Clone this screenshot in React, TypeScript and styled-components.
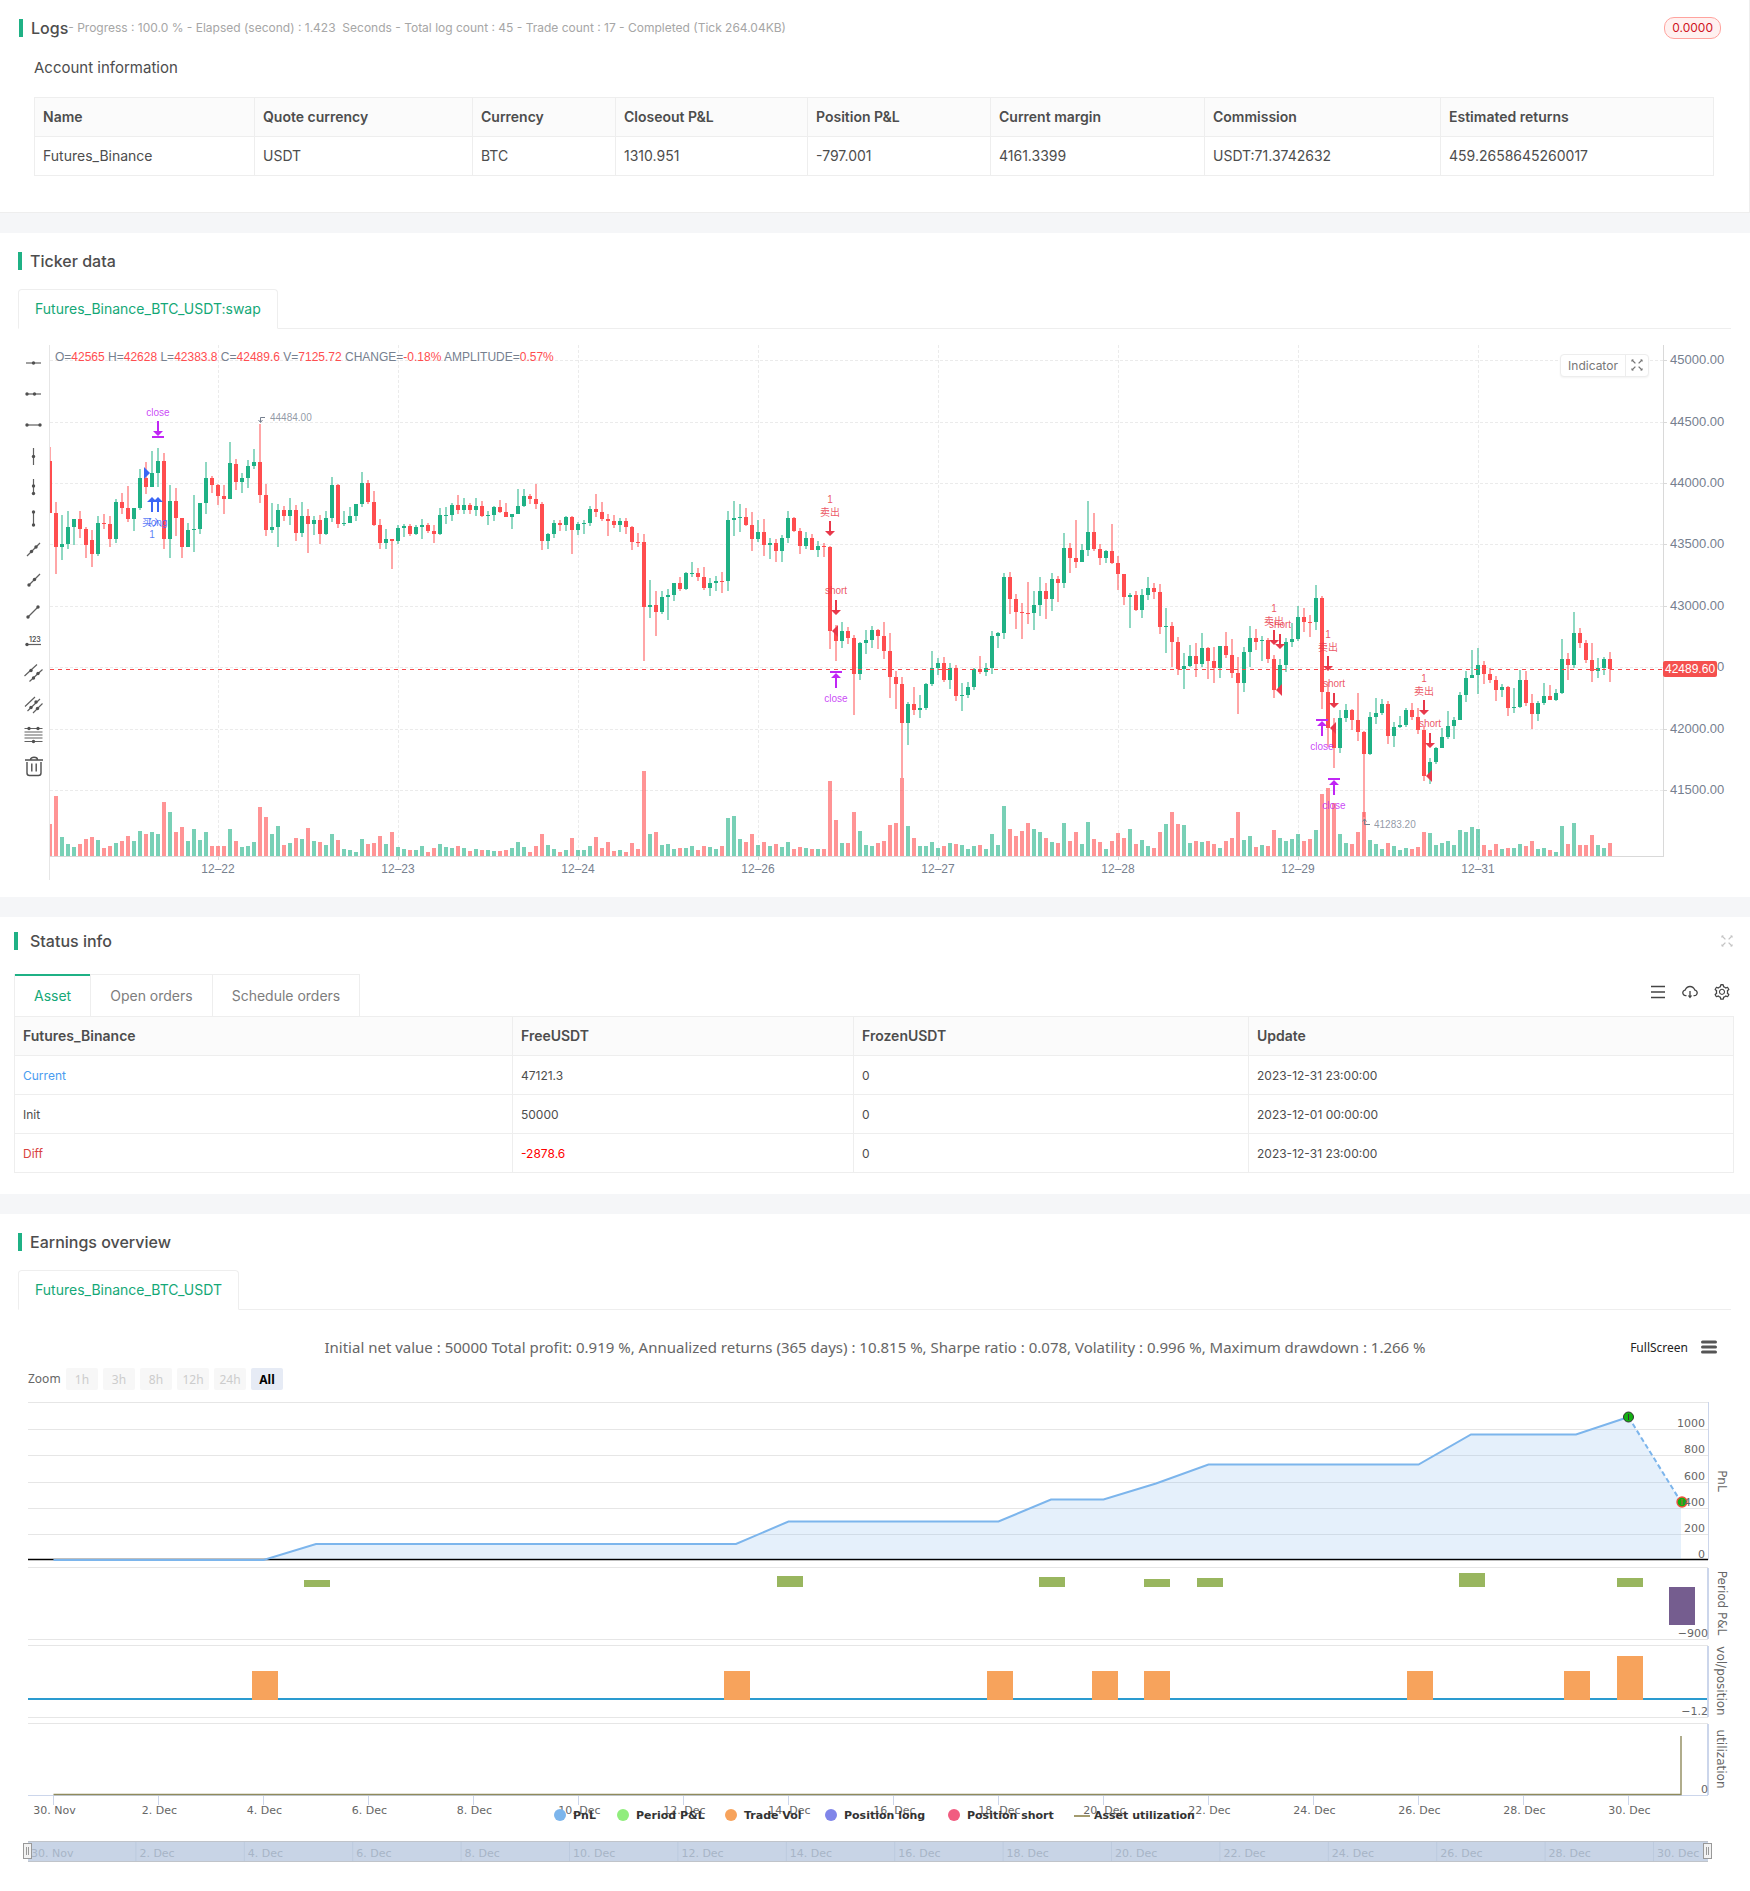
import React from "react";
import styled, { createGlobalStyle } from "styled-components";
import { AiOutlineCloudDownload, AiOutlineSetting } from "react-icons/ai";

const UI = `Inter, "Noto Sans CJK SC", sans-serif`;
const CANVAS = `"Liberation Sans", "Noto Sans CJK SC", sans-serif`;
const CHART = `"DejaVu Sans", "Noto Sans CJK SC", sans-serif`;
const CHART_HEAD = `"Noto Sans", "Noto Sans CJK SC", sans-serif`;

const UP = "#1fb185";
const DOWN = "#ff4d4f";
const LINE = "#eeeeee";

const GlobalStyle = createGlobalStyle`
  *, *::before, *::after { box-sizing: border-box; }
  body {
    margin: 0;
    background: #ffffff;
    color: #4d4d4d;
    font-family: ${UI};
    font-size: 14px;
    line-height: 22px;
  }
  button { font-family: inherit; cursor: pointer; }
`;

const Page = styled.main`
  display: flex;
  flex-direction: column;
  gap: 20px;
  background: #f5f6f8;
`;

const Card = styled.section<{ $top: number; $bottom: number; $edged?: boolean }>`
  display: flex;
  flex-direction: column;
  padding: ${(p) => p.$top}px 0 ${(p) => p.$bottom}px;
  background: #ffffff;
  border: 0 solid ${LINE};
  border-width: ${(p) => (p.$edged ? "0 1px 1px 0" : "0")};
`;

const CardHead = styled.header<{ $left: number }>`
  display: flex;
  align-items: center;
  height: 24px;
  padding: 0 28px 0 ${(p) => p.$left}px;
`;

const Marker = styled.span`
  width: 4px;
  height: 18px;
  background: ${UP};
`;

const CardTitle = styled.h2<{ $gap: number }>`
  margin: 0 0 0 ${(p) => p.$gap}px;
  font-size: 16px;
  line-height: 24px;
  font-weight: 500;
`;

const Progress = styled.span`
  flex: 1;
  color: #a6a6a6;
  font-size: 12px;
  white-space: pre;
`;

const Tag = styled.span`
  padding: 0 7px;
  border: 1px solid #ffa39e;
  border-radius: 10px;
  background: #fff1f0;
  color: #cf1322;
  font-size: 12px;
  line-height: 20px;
`;

const IconButton = styled.button`
  display: flex;
  align-items: center;
  justify-content: center;
  width: 18px;
  height: 18px;
  margin-left: auto;
  margin-right: -14px;
  padding: 0;
  border: 0;
  background: none;
  color: #c4c4c4;
`;

const SubTitle = styled.h3`
  margin: 16px 34px 17px;
  font-size: 15px;
  line-height: 24px;
  font-weight: 400;
`;

const TableWrap = styled.div<{ $pad: string }>`
  padding: ${(p) => p.$pad};
`;

const Table = styled.table`
  width: 100%;
  table-layout: fixed;
  border-collapse: collapse;
`;

const Th = styled.th`
  padding: 8px;
  border: 1px solid ${LINE};
  background: #fbfbfb;
  font-weight: 600;
  text-align: left;
`;

const Td = styled.td<{ $small?: boolean; $color?: string }>`
  padding: ${(p) => (p.$small ? "9px 8px 7px" : "8px")};
  border: 1px solid ${LINE};
  font-size: ${(p) => (p.$small ? 12 : 14)}px;
  color: ${(p) => p.$color ?? "inherit"};
`;

const PairTabs = styled.div`
  display: flex;
  margin: 16px 19px 0 18px;
  height: 40px;
  border-bottom: 1px solid ${LINE};
`;

const PairTab = styled.button`
  height: 40px;
  padding: 0 16px 2px;
  border: 1px solid ${LINE};
  border-bottom-color: #ffffff;
  border-radius: 4px 4px 0 0;
  background: #ffffff;
  color: #14a877;
  font-size: 14px;
`;

const TickerBody = styled.div`
  display: flex;
  margin-top: 16px;
  padding-left: 18px;
`;

const Tools = styled.div`
  display: flex;
  flex-direction: column;
  width: 32px;
  padding-top: 3px;
  border-right: 1px solid #e6e6e6;
`;

const Tool = styled.button`
  display: flex;
  align-items: center;
  justify-content: center;
  height: 31px;
  padding: 0;
  border: 0;
  background: none;
  color: #606060;
`;

const CandleArea = styled.div`
  position: relative;
  flex: 1;
`;

const Drawing = styled.svg<{ $font: string }>`
  display: block;
  width: 100%;
  height: auto;
  font-family: ${(p) => p.$font};
`;

const IndicatorBox = styled.div`
  position: absolute;
  top: 9px;
  right: 101px;
  display: flex;
  border: 1px solid #ededed;
  border-radius: 4px;
  background: #ffffff;
  box-shadow: 0 1px 2px rgba(0, 0, 0, 0.05);
`;

const IndicatorButton = styled.button<{ $width: number }>`
  display: flex;
  align-items: center;
  justify-content: center;
  width: ${(p) => p.$width}px;
  height: 21px;
  padding: 0 0 1px;
  border: 0;
  background: none;
  color: #777777;
  font-size: 12px;
  & + & { border-left: 1px solid #ededed; }
`;

const StatusBar = styled.div`
  display: flex;
  align-items: center;
  justify-content: space-between;
  height: 42px;
  margin-top: 21px;
  padding: 0 14px;
`;

const StatusTabs = styled.div`
  display: flex;
  border-left: 1px solid ${LINE};
`;

const StatusTab = styled.button<{ $active?: boolean }>`
  height: 42px;
  padding: 0 19px;
  border: 0;
  border-right: 1px solid ${LINE};
  background: #ffffff;
  box-shadow: inset 0 ${(p) => (p.$active ? 2 : 1)}px 0 ${(p) => (p.$active ? UP : LINE)};
  color: ${(p) => (p.$active ? "#14a877" : "#7d7d7d")};
  font-size: 14px;
`;

const StatusActions = styled.div`
  display: flex;
  gap: 14px;
  padding: 0 5px 6px 0;
`;

const ActionButton = styled.button`
  display: flex;
  align-items: center;
  justify-content: center;
  width: 18px;
  height: 18px;
  padding: 0;
  border: 0;
  background: none;
  color: #454545;
`;

const EarningsHead = styled.div`
  display: grid;
  grid-template-columns: 1fr auto 1fr;
  align-items: center;
  height: 24px;
  margin-top: 25px;
  padding: 0 33px;
  font-family: ${CHART_HEAD};
`;

const EarningsTitle = styled.h3`
  grid-column: 2;
  margin: 0;
  color: #666666;
  font-size: 15px;
  font-weight: 400;
  white-space: nowrap;
`;

const EarningsActions = styled.div`
  display: flex;
  justify-content: flex-end;
  align-items: center;
  gap: 13px;
`;

const PlainButton = styled.button`
  display: flex;
  padding: 0;
  border: 0;
  background: none;
  color: #222222;
  font-size: 12px;
`;

const ZoomRow = styled.div`
  display: flex;
  align-items: center;
  gap: 5px;
  margin-top: 9px;
  padding-left: 28px;
  font-family: ${CHART_HEAD};
`;

const ZoomLabel = styled.span`
  width: 33px;
  color: #666666;
  font-size: 12px;
`;

const ZoomButton = styled.button<{ $active?: boolean }>`
  width: 32px;
  height: 22px;
  padding: 0;
  border: 0;
  border-radius: 2px;
  background: ${(p) => (p.$active ? "#e6ebf5" : "#f7f7f7")};
  color: ${(p) => (p.$active ? "#000000" : "#cccccc")};
  font-size: 12px;
  font-weight: ${(p) => (p.$active ? 700 : 400)};
`;

/* ---------- data ---------- */

const account = [
  { head: "Name", value: "Futures_Binance", share: 220 },
  { head: "Quote currency", value: "USDT", share: 218 },
  { head: "Currency", value: "BTC", share: 143 },
  { head: "Closeout P&L", value: "1310.951", share: 192 },
  { head: "Position P&L", value: "-797.001", share: 183 },
  { head: "Current margin", value: "4161.3399", share: 214 },
  { head: "Commission", value: "USDT:71.3742632", share: 236 },
  { head: "Estimated returns", value: "459.2658645260017", share: 273 },
];

const assetColumns = [
  { head: "Futures_Binance", share: 498 },
  { head: "FreeUSDT", share: 341 },
  { head: "FrozenUSDT", share: 395 },
  { head: "Update", share: 485 },
];

const assetRows = [
  { name: "Current", nameColor: "#4a9cf0", free: "47121.3", frozen: "0", update: "2023-12-31 23:00:00" },
  { name: "Init", free: "50000", frozen: "0", update: "2023-12-01 00:00:00" },
  { name: "Diff", nameColor: "#d9433f", free: "-2878.6", freeColor: "#ff0000", frozen: "0", update: "2023-12-31 23:00:00" },
];

/* One hourly candle per entry: direction, high, body top, body bottom, low, volume.
   Levels count downwards, 0.3503 of a level per price unit. */
const CANDLES = `
r,305,345,492,492,1380 r,462,493,590,666,1301 g,500,582,590,627,1417 g,488,533,582,596,1438 g,510,510,533,584,1445
r,488,510,539,564,1438 r,533,539,584,621,1424 r,542,570,610,647,1417 g,502,522,610,615,1426 r,496,521,525,539,1447
r,502,525,567,590,1443 g,453,462,567,578,1434 r,436,462,479,496,1429 r,416,479,510,518,1414 g,479,479,510,545,1427
g,368,393,479,485,1401 r,348,393,419,438,1408 g,317,379,419,419,1403 g,308,345,379,419,1408 r,322,345,567,596,1318
g,413,459,567,621,1346 r,422,459,507,559,1404 r,507,507,590,621,1389 g,522,542,590,590,1427 g,442,539,542,604,1394
g,465,465,539,553,1426 g,348,393,465,496,1403 r,388,393,413,436,1443 r,410,413,445,470,1444 r,413,445,453,496,1443
g,291,351,453,453,1395 r,339,354,405,428,1427 g,379,393,405,436,1445 g,342,359,393,422,1443 g,311,348,359,368,1431
r,239,348,442,465,1332 r,411,442,542,559,1361 g,465,533,542,550,1408 g,468,485,533,590,1386 r,473,485,502,516,1440
g,450,485,502,527,1435 r,470,485,550,573,1421 g,462,502,550,562,1424 r,482,502,525,607,1391 g,502,513,525,556,1429
r,499,513,553,582,1432 g,488,507,553,556,1441 g,391,413,507,519,1408 r,411,413,525,536,1426 g,488,522,525,530,1450
g,476,502,522,522,1455 g,468,468,502,516,1460 g,376,408,468,476,1423 r,399,408,462,468,1438 r,430,462,527,530,1434
r,510,527,578,596,1414 g,539,567,578,596,1438 r,567,567,573,653,1404 g,527,536,573,582,1446 g,525,530,536,562,1452
r,524,530,553,559,1455 g,527,533,553,556,1454 g,510,527,533,567,1443 r,522,527,545,550,1459 r,527,545,553,578,1449
g,479,499,553,556,1437 g,476,498,501,525,1446 g,465,470,499,516,1448 r,442,470,485,496,1443 g,450,470,485,496,1448
r,465,470,485,496,1457 g,450,473,485,502,1451 r,459,473,502,505,1454 g,488,498,501,527,1455 g,473,476,499,516,1457
r,456,476,490,493,1457 r,465,490,505,505,1454 g,496,496,505,539,1447 g,425,473,496,496,1431 g,425,445,473,476,1445
r,439,445,453,468,1460 r,411,453,468,482,1443 r,462,468,573,599,1409 g,550,553,573,596,1440 g,513,522,553,564,1451
r,513,522,527,545,1459 g,502,505,527,545,1454 r,502,505,542,610,1420 g,520,525,542,556,1454 g,513,522,525,553,1455
g,473,482,522,530,1443 r,439,482,490,505,1417 r,462,490,510,516,1447 r,496,510,516,559,1432 r,499,516,527,536,1456
g,507,516,527,547,1454 r,507,516,533,553,1459 r,530,533,576,599,1434 r,550,575,578,590,1451 r,553,576,761,914,1229
g,684,755,761,793,1408 r,716,755,775,844,1403 g,716,733,775,781,1440 g,710,727,733,798,1438 g,693,693,727,744,1451
r,676,693,710,716,1448 g,661,664,710,713,1448 g,633,664,667,676,1443 r,650,664,676,687,1454 r,647,676,707,713,1443
g,679,693,707,730,1445 g,673,687,693,716,1451 r,661,686,689,721,1443 g,488,513,687,716,1363 g,459,507,513,559,1357
g,468,504,507,547,1424 r,479,505,527,530,1431 r,490,527,567,602,1408 g,513,547,567,576,1441 r,510,547,584,616,1431
g,564,579,584,624,1444 r,567,579,602,633,1438 g,556,564,602,633,1445 g,488,507,564,579,1431 r,505,507,545,547,1451
r,536,545,587,610,1445 g,547,564,587,596,1449 r,553,564,599,599,1452 g,573,587,599,619,1451 r,579,587,590,619,1451
r,587,590,830,881,1257 r,813,830,858,914,1369 g,804,830,858,878,1434 r,818,830,850,867,1434 r,841,850,952,1069,1347
g,861,864,952,969,1401 g,827,855,864,895,1440 g,815,827,855,878,1443 r,825,827,844,881,1434 r,804,844,887,909,1428
r,835,887,961,1021,1384 r,944,961,981,1052,1378 r,961,981,1092,1249,1249 g,1032,1038,1092,1155,1386 r,989,1038,1055,1069,1421
g,1012,1049,1055,1078,1444 g,978,981,1049,1055,1443 g,887,935,981,986,1431 g,907,921,935,955,1448 r,904,921,969,975,1443
g,921,935,969,995,1434 r,927,935,1015,1029,1437 g,978,1012,1015,1058,1440 g,975,989,1012,1021,1451 g,935,938,989,998,1442
r,901,938,947,952,1440 g,921,935,947,958,1451 g,830,844,935,952,1409 g,832,835,844,878,1441 g,664,676,835,852,1329
r,661,676,738,781,1395 r,724,738,775,824,1415 r,750,775,778,852,1401 r,690,777,780,810,1377 g,716,755,778,827,1394
g,676,716,755,787,1403 r,693,716,738,795,1421 g,664,681,738,773,1432 r,673,681,693,747,1435 g,550,593,693,707,1378
r,579,593,621,664,1429 r,513,621,633,650,1404 g,582,599,633,633,1438 g,459,547,599,616,1375 r,493,547,596,602,1423
r,582,596,621,641,1432 g,599,602,621,636,1451 r,525,602,636,639,1427 r,616,636,667,713,1405 r,667,667,733,755,1421
g,721,727,733,821,1395 r,716,727,770,773,1438 g,710,727,770,793,1426 g,676,707,727,741,1443 r,693,707,718,738,1448
r,696,718,818,838,1404 g,764,815,818,892,1381 r,804,815,861,932,1347 r,847,861,938,955,1381 g,892,929,938,995,1384
g,870,901,929,932,1434 r,864,901,924,961,1428 g,835,878,924,932,1431 r,875,878,915,966,1428 r,875,915,935,978,1438
g,872,872,935,964,1448 r,832,872,898,907,1428 r,852,898,949,964,1421 r,904,949,978,1066,1347 g,875,889,978,1004,1426
g,815,850,889,932,1415 r,824,850,861,884,1445 g,844,855,858,915,1440 r,850,855,909,921,1443 r,898,909,998,1021,1396
g,909,927,998,1000,1421 g,850,861,927,947,1427 g,807,852,861,875,1424 g,758,790,852,858,1408 r,764,790,804,832,1427
r,784,803,806,847,1423 g,698,736,804,827,1397 r,730,736,1004,1052,1295 r,975,1004,1106,1160,1278 r,1078,1106,1163,1220,1321
g,1055,1078,1163,1177,1409 g,1038,1055,1078,1089,1434 r,1052,1055,1083,1112,1438 r,1006,1083,1118,1143,1403 r,1115,1118,1180,1361,1347
g,1061,1075,1180,1183,1426 g,1021,1063,1075,1095,1438 g,1023,1038,1063,1069,1451 r,1029,1038,1129,1152,1434 g,1089,1103,1129,1160,1443
g,1072,1098,1103,1106,1454 g,1049,1055,1098,1103,1449 r,1035,1055,1075,1083,1451 r,1049,1075,1112,1123,1445 r,1100,1112,1243,1257,1402
g,1192,1203,1243,1266,1405 g,1160,1163,1203,1209,1440 g,1106,1132,1163,1163,1434 g,1058,1100,1132,1138,1428 g,1075,1083,1100,1138,1441
g,1004,1012,1083,1083,1397 g,944,964,1012,1032,1403 g,884,955,964,964,1389 g,878,927,955,1009,1395 r,915,927,952,981,1440
r,935,952,969,978,1454 r,958,969,998,1029,1438 g,981,989,998,1018,1452 r,986,989,1049,1072,1448 g,992,1046,1049,1063,1447
g,941,969,1046,1049,1437 r,944,969,1035,1043,1443 r,1009,1035,1066,1109,1428 g,1029,1035,1066,1086,1451 g,978,1015,1035,1040,1447
r,984,1015,1026,1026,1454 g,995,1006,1026,1029,1460 g,852,909,1006,1009,1385 r,892,909,927,969,1438 g,775,835,927,935,1378
r,821,835,864,878,1440 r,855,864,912,921,1441 r,864,912,944,975,1410 g,907,935,944,964,1440 g,904,909,935,955,1449
r,889,909,938,975,1435`
  .trim()
  .split(/\s+/)
  .map((row) => {
    const [dir, ...levels] = row.split(",");
    return { color: dir === "g" ? UP : DOWN, levels: levels.map(Number) };
  });

const levelY = (level: number) => Math.round((level * 1000) / 2851) + 340;
const VOLUME_BASE = 856;

const priceGrid: [string, number][] = [
  ["45000.00", 360], ["44500.00", 422], ["44000.00", 483], ["43500.00", 544],
  ["43000.00", 606], ["42500.00", 667], ["42000.00", 729], ["41500.00", 790],
];

const dateGrid = ["12–22", "12–23", "12–24", "12–26", "12–27", "12–28", "12–29", "12–31"];

const quote: [string, string][] = [
  ["O=", "42565"], [" H=", "42628"], [" L=", "42383.8"], [" C=", "42489.6"],
  [" V=", "7125.72"], [" CHANGE=", "-0.18%"], [" AMPLITUDE=", "0.57%"],
];

/* ---------- small drawings ---------- */

const CornersIcon = ({ size = 12 }: { size?: number }) => (
  <svg width={size} height={size} viewBox="0 0 12 12" fill="none" stroke="currentColor" strokeWidth="1.3">
    <path d="M1 1 4.4 4.4M11 1 7.6 4.4M1 11 4.4 7.6M11 11 7.6 7.6" />
    <path d="M0.8 2.8V0.8H2.6M9.4 0.8H11.2V2.8M0.8 9.2V11.2H2.6M9.4 11.2H11.2V9.2" strokeWidth="0.7" />
  </svg>
);

type ToolShape = { name: string; lines: string; dots: [number, number][] };

const toolShapes: ToolShape[] = [
  { name: "Horizontal line", lines: "M2 9H17", dots: [[9.5, 9]] },
  { name: "Horizontal ray", lines: "M3 9H17", dots: [[3, 9], [10.5, 9]] },
  { name: "Horizontal segment", lines: "M3 9H16", dots: [[3, 9], [16, 9]] },
  { name: "Vertical line", lines: "M9.5 1V18", dots: [[9.5, 9.5]] },
  { name: "Vertical ray", lines: "M9.5 1V16", dots: [[9.5, 8], [9.5, 15.5]] },
  { name: "Vertical segment", lines: "M9.5 3V16", dots: [[9.5, 3], [9.5, 16]] },
  { name: "Straight line", lines: "M3 16 16 3", dots: [[7.5, 11.5], [12, 7]] },
  { name: "Ray", lines: "M5 14 16 3", dots: [[5, 14], [10.5, 8.5]] },
  { name: "Segment", lines: "M4 15 14 5", dots: [[4, 15], [14, 5]] },
  { name: "Price line", lines: "M3 11.5H17", dots: [[3, 11.5]] },
  { name: "Parallel lines", lines: "M0.5 12 13 0.5M5.5 17.5 18.5 5.5", dots: [[7, 6.5], [14, 9.5], [9.5, 14]] },
  { name: "Price channel", lines: "M1 11.5 11 2M3.5 16 16 4M9 18 18.5 8.5", dots: [[12, 7], [7, 12.5], [13.5, 13.5]] },
  { name: "Fibonacci lines", lines: "M0.5 2.5H18.5M0.5 6H18.5M0.5 9H18.5M0.5 12H18.5M0.5 15.5H18.5", dots: [[5, 2.5], [14, 2.5], [9.5, 15.5]] },
];

const ToolIcon = ({ shape }: { shape: ToolShape }) => (
  <svg width="19" height="19" viewBox="0 0 19 19" aria-hidden="true">
    <path d={shape.lines} fill="none" stroke="currentColor" strokeWidth="1.2" />
    {shape.dots.map(([x, y]) => (
      <circle key={`${x}-${y}`} cx={x} cy={y} r="1.7" fill="#505050" />
    ))}
    {shape.name === "Price line" && (
      <text x="5" y="9" fontSize="7" fontWeight="600" fontFamily="Inter" fill="#505050">
        123
      </text>
    )}
  </svg>
);

const TrashIcon = () => (
  <svg width="20" height="22" viewBox="0 0 20 22" fill="none" stroke="#505050" strokeWidth="1.4" aria-hidden="true">
    <path d="M1 4H19M6.5 3.5C6.5 0.5 13.5 0.5 13.5 3.5M3 6V17Q3 19.500 5.500 19.500H14.500Q17 19.500 17 17V6M7.800 7.500V15.500M12.200 7.500V15.500" />
  </svg>
);

const DownArrow = ({ x, y, color }: { x: number; y: number; color: string }) => (
  <path d={`M${x - 1} ${y}h2v10h4l-5 5l-5-5h4z`} fill={color} />
);

const UpArrow = ({ x, y, color }: { x: number; y: number; color: string }) => (
  <path d={`M${x} ${y}l5 5h-4v10h-2v-10h-4z`} fill={color} />
);

const SELL = "#e8384a";
const CLOSE = "#c026f5";
const BUY = "#3b66f5";

const Note = ({ x, y, color, children }: { x: number; y: number; color: string; children: string }) => (
  <text x={x} y={y} fill={color} fillOpacity="0.85" fontSize="10" textAnchor="middle">
    {children}
  </text>
);

const sellSignals = [
  { x: 830, y: 521 }, { x: 1274, y: 630 }, { x: 1328, y: 656 }, { x: 1424, y: 700 },
];
const shortSignals = [
  { x: 836, y: 600, entry: 631 }, { x: 1280, y: 634, entry: 690 },
  { x: 1334, y: 693, entry: 728 }, { x: 1430, y: 733, entry: 776 },
];
const closeSignals = [{ x: 836, y: 671 }, { x: 1322, y: 719 }, { x: 1334, y: 778 }];

const CandleChart = () => (
  <Drawing $font={CANVAS} viewBox="50 345 1700 535" role="img" aria-label="BTC price candles and volume">
    <g stroke="#ebebeb" strokeDasharray="3 2" shapeRendering="crispEdges">
      {priceGrid.map(([label, y]) => (
        <path key={label} d={`M50 ${y + 0.5}H1663`} />
      ))}
      {dateGrid.map((label, i) => (
        <path key={label} d={`M${218.5 + i * 180} 345V856`} />
      ))}
    </g>

    <g shapeRendering="crispEdges">
      {CANDLES.map(({ color, levels }, i) => {
        const x = 50 + i * 6;
        const [high, top, bottom, low, volume] = levels.map(levelY);
        return (
          <g key={i} fill={color}>
            <rect x={x - 2} y={volume} width="4" height={VOLUME_BASE - volume} fillOpacity="0.6" />
            <rect x={x - 1} y={high} width="2" height={top - high} fillOpacity="0.5" />
            <rect x={x - 1} y={bottom} width="2" height={low - bottom} fillOpacity="0.5" />
            <rect x={x - 2} y={top} width="4" height={Math.max(1, bottom - top)} />
          </g>
        );
      })}
    </g>

    <g stroke="#d9d9d9" shapeRendering="crispEdges">
      <path d="M50 856.500H1663.500M1663.500 345V857" fill="none" />
      {priceGrid.map(([label, y]) => (
        <path key={label} d={`M1664 ${y + 0.5}h3`} />
      ))}
      {dateGrid.map((label, i) => (
        <path key={label} d={`M${218.5 + i * 180} 857v3`} />
      ))}
    </g>

    <g fill="#76808f" fontSize="12">
      {priceGrid.map(([label, y]) => (
        <text key={label} x="1670" y={y + 4} fontSize="13">{label}</text>
      ))}
      {dateGrid.map((label, i) => (
        <text key={label} x={218 + i * 180} y="873" textAnchor="middle">{label}</text>
      ))}
      <text x="55" y="361" style={{ whiteSpace: "pre" }}>
        {quote.map(([label, value]) => (
          <React.Fragment key={label}>
            {label}
            <tspan fill={DOWN}>{value}</tspan>
          </React.Fragment>
        ))}
      </text>
    </g>

    <path d="M50 669.500H1663" stroke="#f5484a" strokeDasharray="4 4" shapeRendering="crispEdges" />
    <rect x="1663" y="661" width="54" height="16" rx="2" fill="#f5504e" />
    <text x="1665" y="673" fontSize="12" fill="#ffffff">42489.60</text>

    <g fill="#76808f" fillOpacity="0.8" fontSize="10">
      <text x="270" y="421">44484.00</text>
      <text x="1374" y="828">41283.20</text>
    </g>
    <path d="M265 417.500H260.500V422M258.500 420l2 2.500l2-2.500M1370 824.500H1364.500V819M1362.500 821.500l2-2.500l2 2.500" fill="none" stroke="#76808f" />

    <Note x={158} y={416} color={CLOSE}>close</Note>
    <DownArrow x={158} y={421} color={CLOSE} />
    <rect x="152" y="436" width="12" height="2" fill={CLOSE} />
    <path d="M144 467l6 6l-6 6z" fill={BUY} />
    <UpArrow x={152} y={497} color={BUY} />
    <UpArrow x={158} y={497} color={BUY} />
    <Note x={152} y={526} color={BUY}>买入</Note>
    <Note x={158} y={526} color={BUY}>long</Note>
    <Note x={152} y={538} color={BUY}>1</Note>

    {sellSignals.map(({ x, y }) => (
      <g key={x}>
        <Note x={x} y={y - 18} color={SELL}>1</Note>
        <Note x={x} y={y - 5} color={SELL}>卖出</Note>
        <DownArrow x={x} y={y} color={SELL} />
      </g>
    ))}
    {shortSignals.map(({ x, y, entry }) => (
      <g key={x}>
        <Note x={x} y={y - 6} color={SELL}>short</Note>
        <DownArrow x={x} y={y} color={SELL} />
        <path d={`M${x + 2} ${entry - 6}v12l-6-6z`} fill={SELL} />
      </g>
    ))}
    {closeSignals.map(({ x, y }) => (
      <g key={x}>
        <rect x={x - 6} y={y} width="12" height="2" fill={CLOSE} />
        <UpArrow x={x} y={y + 2} color={CLOSE} />
        <Note x={x} y={y + 31} color={CLOSE}>close</Note>
      </g>
    ))}
  </Drawing>
);

/* ---------- earnings ---------- */

const dayX = (day: number) => 53.5 + day * 52.5;
const pnl: [number, number][] = [
  [0, 1560], [4, 1560], [5, 1544], [13, 1544], [14, 1521.5], [18, 1521.5], [19, 1499.5], [20, 1499.5],
  [21, 1483.5], [22, 1464.5], [26, 1464.5], [27, 1434.5], [29, 1434.5], [30, 1417],
];
const pnlPath = "M" + pnl.map(([d, y]) => `${dayX(d)} ${y}`).join("L");
const pnlTicks: [string, number][] = [
  ["1000", 1429], ["800", 1455], ["600", 1482], ["400", 1508], ["200", 1534], ["0", 1560],
];
const periodBars: [number, number][] = [
  [5, 1580], [14, 1576], [19, 1577], [21, 1579], [22, 1578], [27, 1573], [30, 1578],
];
const volumeBars: [number, number][] = [
  [4, 1671], [13, 1671], [18, 1671], [20, 1671], [21, 1671], [26, 1671], [29, 1671], [30, 1656],
];
const evenDays = Array.from({ length: 16 }, (_, i) => i * 2);
const dayName = (d: number) => (d === 0 ? "30. Nov" : `${d}. Dec`);

const paneTitles: [string, number, number][] = [
  ["PnL", 1718, 1481], ["Period P&L", 1718, 1603], ["vol/position", 1717, 1681], ["utilization", 1717, 1759],
];

const legend = [
  { x: 560, label: "PnL", color: "#7cb5ec" },
  { x: 623, label: "Period P&L", color: "#90ed7d" },
  { x: 731, label: "Trade Vol", color: "#f7a35c" },
  { x: 831, label: "Position long", color: "#8085e9" },
  { x: 954, label: "Position short", color: "#f15c80" },
];

const EarningsChart = () => (
  <Drawing $font={CHART} viewBox="0 1390 1750 501" role="img" aria-label="Earnings over December">
    <g stroke="#e6e6e6" shapeRendering="crispEdges">
      {[1402, 1429, 1455, 1482, 1508, 1534, 1567, 1639, 1645, 1717, 1723].map((y) => (
        <path key={y} d={`M28 ${y + 0.5}H1708`} />
      ))}
    </g>
    <path d="M28 1559.500H1708" stroke="#000000" strokeWidth="1.500" />
    <path d={`${pnlPath}L${dayX(31)} 1502V1559H${dayX(0)}Z`} fill="#7cb5ec" fillOpacity="0.2" />
    <path d={pnlPath} fill="none" stroke="#7cb5ec" strokeWidth="2" />
    <path d={`M${dayX(30)} 1417L${dayX(31)} 1502`} stroke="#7cb5ec" strokeWidth="2" strokeDasharray="5 3" />

    <g shapeRendering="crispEdges">
      {periodBars.map(([d, y]) => (
        <rect key={d} x={dayX(d) - 12} y={y} width="26" height={1587 - y} fill="#99b65f" />
      ))}
      <rect x={dayX(31) - 12} y="1587" width="26" height="38" fill="#755d8f" />
      <path d="M28 1699H1708" stroke="#2a9bd0" strokeWidth="2" />
      {volumeBars.map(([d, y]) => (
        <rect key={d} x={dayX(d) - 12} y={y} width="26" height={1700 - y} fill="#f7a35c" />
      ))}
    </g>

    <g stroke="#ccd6eb" fill="none" shapeRendering="crispEdges">
      <path d="M1708.500 1402V1560M28 1795.500H1708" />
      <path d="M1708 1568V1639M1708 1646V1717M1708 1724V1795" strokeWidth="2" />
      {evenDays.map((d) => (
        <path key={d} d={`M${dayX(d)} 1796v9`} />
      ))}
    </g>
    <path d={`M${dayX(0)} 1794.500H${dayX(31)}V1736`} fill="none" stroke="#8f8a5c" strokeWidth="1.400" />

    <circle cx={dayX(30)} cy="1417" r="5" fill="#12b012" stroke="#333333" />
    <circle cx={dayX(31) + 1} cy="1502" r="5" fill="#12b012" stroke="#f0503c" strokeWidth="1.400" />
    <path d={`M${dayX(30)} 1414v6`} stroke="#333333" />
    <path d={`M${dayX(31) + 1} 1499v6`} stroke="#c0603c" />

    <g fill="#666666" fontSize="11">
      <g textAnchor="end">
        {pnlTicks.map(([label, y]) => (
          <text key={label} x="1705" y={y - 2}>{label}</text>
        ))}
        <text x="1708" y="1637">−900</text>
        <text x="1708" y="1715">−1.2</text>
        <text x="1708" y="1793">0</text>
      </g>
      <g textAnchor="middle">
        {paneTitles.map(([label, x, y]) => (
          <text key={label} fontSize="12" transform={`translate(${x} ${y}) rotate(90)`}>{label}</text>
        ))}
        {evenDays.map((d) => (
          <text key={d} x={dayX(d) + 1} y="1814">{dayName(d)}</text>
        ))}
      </g>
    </g>

    <g fill="#333333" fontSize="11" fontWeight="700">
      {legend.map(({ x, label, color }) => (
        <g key={label}>
          <circle cx={x} cy="1815" r="6" fill={color} />
          <text x={x + 13} y="1819">{label}</text>
        </g>
      ))}
      <path d="M1074 1816H1090" stroke="#a39b6e" strokeWidth="2" />
      <text x="1094" y="1819">Asset utilization</text>
    </g>

    <rect x="28" y="1841" width="1680" height="21" fill="#c8d4e6" />
    <path d="M28 1841.500H1708M28 1861.500H1708" stroke="#c0c4ca" />
    <g fontSize="11" fill="#a7b4c7">
      {evenDays.map((d, i) => (
        <g key={d}>
          {i > 0 && <path d={`M${27.5 + i * 108.4} 1842v19`} stroke="#bccade" />}
          <text x={31 + i * 108.4} y="1857">{dayName(d)}</text>
        </g>
      ))}
    </g>
    {[28, 1708].map((x) => (
      <g key={x} stroke="#999999">
        <rect x={x - 4.5} y="1843.500" width="8" height="15" fill="#f2f2f2" />
        <path d={`M${x - 1.5} 1847v8M${x + 0.5} 1847v8`} />
      </g>
    ))}
  </Drawing>
);

/* ---------- page ---------- */

const Columns = ({ shares }: { shares: number[] }) => {
  const total = shares.reduce((sum, s) => sum + s, 0);
  return (
    <colgroup>
      {shares.map((s, i) => (
        <col key={i} style={{ width: `${(s / total) * 100}%` }} />
      ))}
    </colgroup>
  );
};

const LogsCard = () => (
  <Card $top={16} $bottom={36} $edged>
    <CardHead $left={19}>
      <Marker />
      <CardTitle $gap={8}>Logs</CardTitle>
      <Progress>
        {"- Progress : 100.0 % - Elapsed (second) : 1.423  Seconds - Total log count : 45 - Trade count : 17 - Completed (Tick 264.04KB)"}
      </Progress>
      <Tag>0.0000</Tag>
    </CardHead>
    <SubTitle>Account information</SubTitle>
    <TableWrap $pad="0 35px 0 34px">
      <Table>
        <Columns shares={account.map((c) => c.share)} />
        <thead>
          <tr>
            {account.map((c) => (
              <Th key={c.head} scope="col">{c.head}</Th>
            ))}
          </tr>
        </thead>
        <tbody>
          <tr>
            {account.map((c) => (
              <Td key={c.head}>{c.value}</Td>
            ))}
          </tr>
        </tbody>
      </Table>
    </TableWrap>
  </Card>
);

const TickerCard = () => (
  <Card $top={16} $bottom={17}>
    <CardHead $left={18}>
      <Marker />
      <CardTitle $gap={8}>Ticker data</CardTitle>
    </CardHead>
    <PairTabs>
      <PairTab type="button">Futures_Binance_BTC_USDT:swap</PairTab>
    </PairTabs>
    <TickerBody>
      <Tools>
        {toolShapes.map((shape) => (
          <Tool key={shape.name} type="button" aria-label={shape.name}>
            <ToolIcon shape={shape} />
          </Tool>
        ))}
        <Tool type="button" aria-label="Remove drawings">
          <TrashIcon />
        </Tool>
      </Tools>
      <CandleArea>
        <CandleChart />
        <IndicatorBox>
          <IndicatorButton type="button" $width={64}>Indicator</IndicatorButton>
          <IndicatorButton type="button" $width={23} aria-label="Full screen">
            <CornersIcon />
          </IndicatorButton>
        </IndicatorBox>
      </CandleArea>
    </TickerBody>
  </Card>
);

const StatusCard = () => (
  <Card $top={12} $bottom={21}>
    <CardHead $left={14}>
      <Marker />
      <CardTitle $gap={12}>Status info</CardTitle>
      <IconButton type="button" aria-label="Expand">
        <CornersIcon />
      </IconButton>
    </CardHead>
    <StatusBar>
      <StatusTabs>
        <StatusTab type="button" $active>Asset</StatusTab>
        <StatusTab type="button">Open orders</StatusTab>
        <StatusTab type="button">Schedule orders</StatusTab>
      </StatusTabs>
      <StatusActions>
        <ActionButton type="button" aria-label="List">
          <svg width="14" height="14" viewBox="0 0 14 14" stroke="currentColor" strokeWidth="1.3">
            <path d="M0 1.500H14M0 7H14M0 12.500H14" />
          </svg>
        </ActionButton>
        <ActionButton type="button" aria-label="Download">
          <AiOutlineCloudDownload size={18} />
        </ActionButton>
        <ActionButton type="button" aria-label="Settings">
          <AiOutlineSetting size={18} />
        </ActionButton>
      </StatusActions>
    </StatusBar>
    <TableWrap $pad="0 16px 0 14px">
      <Table>
        <Columns shares={assetColumns.map((c) => c.share)} />
        <thead>
          <tr>
            {assetColumns.map((c) => (
              <Th key={c.head} scope="col">{c.head}</Th>
            ))}
          </tr>
        </thead>
        <tbody>
          {assetRows.map((r) => (
            <tr key={r.name}>
              <Td $small $color={r.nameColor}>{r.name}</Td>
              <Td $small $color={r.freeColor}>{r.free}</Td>
              <Td $small>{r.frozen}</Td>
              <Td $small>{r.update}</Td>
            </tr>
          ))}
        </tbody>
      </Table>
    </TableWrap>
  </Card>
);

const EarningsCard = () => (
  <Card $top={16} $bottom={0}>
    <CardHead $left={18}>
      <Marker />
      <CardTitle $gap={8}>Earnings overview</CardTitle>
    </CardHead>
    <PairTabs>
      <PairTab type="button">Futures_Binance_BTC_USDT</PairTab>
    </PairTabs>
    <EarningsHead>
      <EarningsTitle>
        Initial net value : 50000 Total profit: 0.919 %, Annualized returns (365 days) : 10.815 %, Sharpe ratio : 0.078, Volatility : 0.996 %, Maximum drawdown : 1.266 %
      </EarningsTitle>
      <EarningsActions>
        <PlainButton type="button">FullScreen</PlainButton>
        <PlainButton type="button" aria-label="Chart menu">
          <svg width="16" height="16" viewBox="0 0 16 16" stroke="#555555" strokeWidth="3" strokeLinecap="round">
            <path d="M1.500 3H14.500M1.500 8H14.500M1.500 13H14.500" />
          </svg>
        </PlainButton>
      </EarningsActions>
    </EarningsHead>
    <ZoomRow>
      <ZoomLabel>Zoom</ZoomLabel>
      {["1h", "3h", "8h", "12h", "24h"].map((label) => (
        <ZoomButton key={label} type="button" disabled>{label}</ZoomButton>
      ))}
      <ZoomButton type="button" $active>All</ZoomButton>
    </ZoomRow>
    <EarningsChart />
  </Card>
);

export default function App() {
  return (
    <>
      <GlobalStyle />
      <Page>
        <LogsCard />
        <TickerCard />
        <StatusCard />
        <EarningsCard />
      </Page>
    </>
  );
}
